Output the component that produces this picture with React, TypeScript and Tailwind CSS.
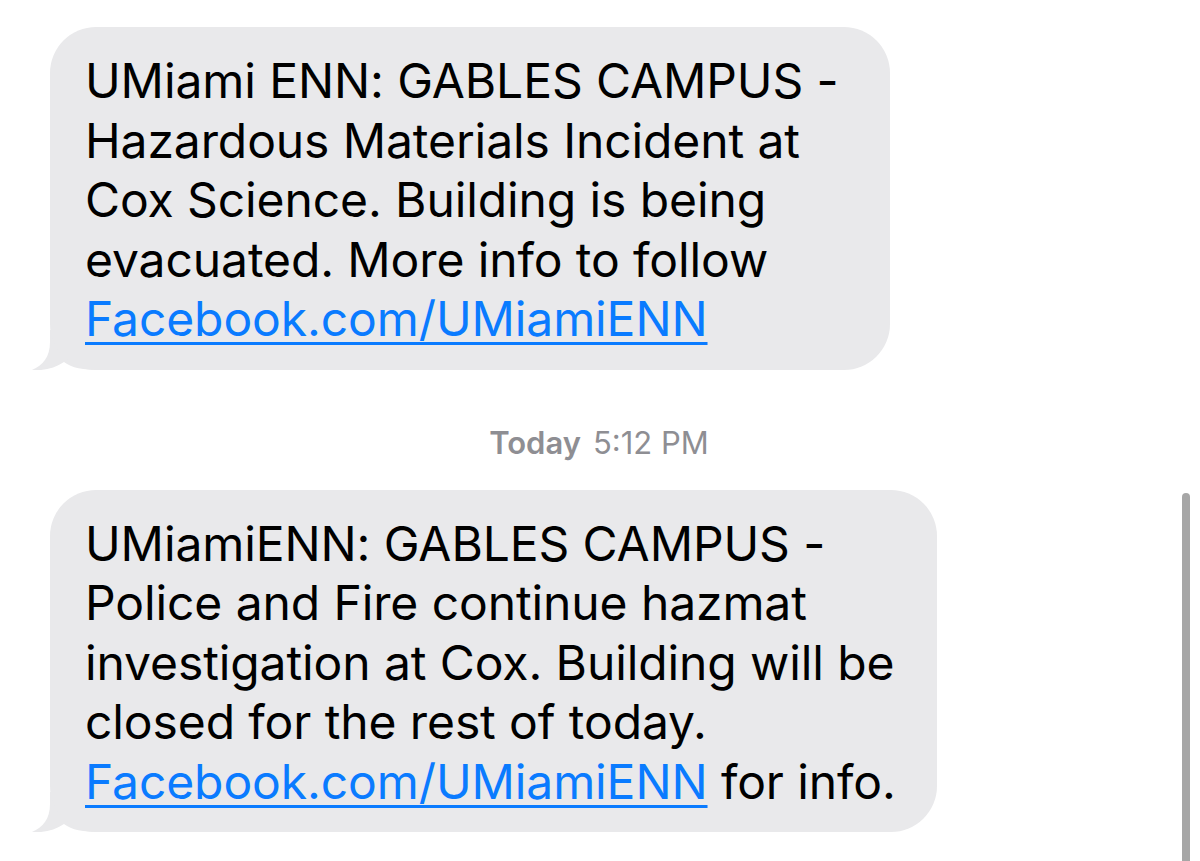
import React from 'react'

function Tail() {
  return (
    <svg
      className="absolute -left-[18px] bottom-0"
      width="70"
      height="40"
      viewBox="0 0 70 40"
    >
      <path
        d="M18 0 L18 12 C18 27 11 35 0 40 C12 41 23 38 32 32 C40 38 50 40 70 40 L70 0 Z"
        fill="#e9e9eb"
      />
    </svg>
  )
}

function Bubble({ width, children }: { width: string; children: React.ReactNode }) {
  return (
    <div className={`relative ${width}`}>
      <Tail />
      <div className="relative rounded-[46px] bg-[#e9e9eb] pl-[35px] pr-[20px] pt-[24px] pb-[21px] text-[48px] leading-[59.5px] tracking-[-0.1px] text-black">
        {children}
      </div>
    </div>
  )
}

function Link({ children }: { children: React.ReactNode }) {
  return (
    <span className="text-[#0a7bff] underline decoration-[3px] underline-offset-[6px]">{children}</span>
  )
}

export default function App() {
  return (
    <div
      className="relative h-[861px] w-[1200px] overflow-hidden bg-white pl-[50px] pt-[27px]"
      style={{ fontFamily: 'Inter, "Liberation Sans", sans-serif' }}
    >
      <Bubble width="w-[840px]">
        UMiami ENN: GABLES CAMPUS -<br />
        Hazardous Materials Incident at<br />
        Cox Science. Building is being<br />
        evacuated. More info to follow<br />
        <Link>Facebook.com/UMiamiENN</Link>
      </Bubble>

      <div className="mt-[55px] flex justify-center pr-[52px] text-[31px] leading-[36px] text-[#8e8e93]">
        <span className="font-semibold">Today</span>
        <span className="ml-[12px]">5:12 PM</span>
      </div>

      <div className="mt-[29px]">
        <Bubble width="w-[887px]">
          UMiamiENN: GABLES CAMPUS -<br />
          Police and Fire continue hazmat<br />
          investigation at Cox. Building will be<br />
          closed for the rest of today.<br />
          <Link>Facebook.com/UMiamiENN</Link> for info.
        </Bubble>
      </div>

      <div className="absolute left-[1182px] top-[493px] h-[400px] w-[8px] rounded-full bg-[#a6a6a6]" />
    </div>
  )
}
